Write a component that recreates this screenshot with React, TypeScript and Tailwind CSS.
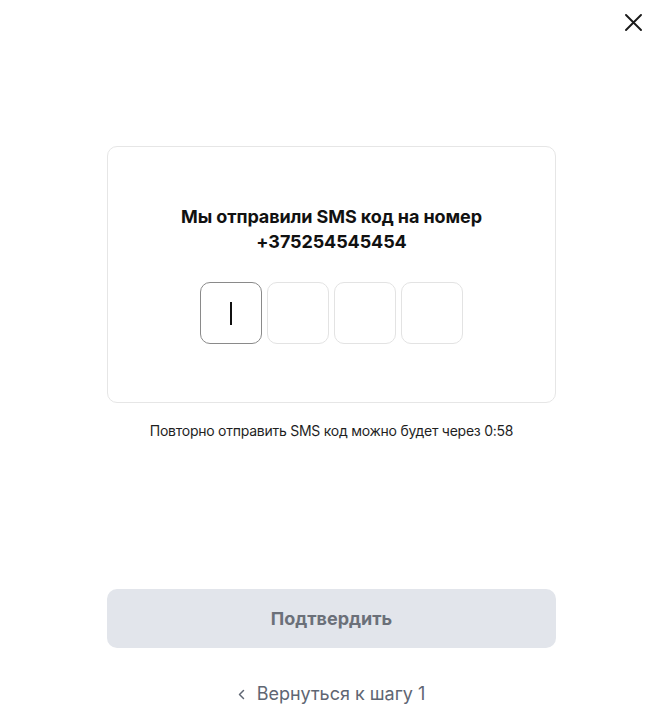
import { useState } from 'react';

const CODE_LENGTH = 4;

export default function App() {
  const [code] = useState<string[]>(Array(CODE_LENGTH).fill(''));
  const phone = '+375254545454';
  const seconds = 58;

  return (
    <div className="relative min-h-[709px] bg-white font-['Inter',sans-serif] text-[#111111]">
      {/* Close */}
      <button
        type="button"
        aria-label="Закрыть"
        className="absolute right-[18px] top-[10px] flex h-[24px] w-[24px] items-center justify-center"
      >
        <svg width="17" height="17" viewBox="0 0 17 17" fill="none">
          <path d="M1 1L16 16M16 1L1 16" stroke="#1a1a1a" strokeWidth="1.9" strokeLinecap="round" />
        </svg>
      </button>

      <div className="flex flex-col items-center pt-[146px]">
        {/* Card */}
        <div className="flex w-[449px] flex-col items-center rounded-[10px] border border-[#e6e6e6] pb-[58px] pt-[57px]">
          <h2 className="text-center text-[18px] font-bold leading-[25px] tracking-[-0.1px]">
            Мы отправили SMS код на номер
            <br />
            {phone}
          </h2>

          <div className="mt-[28px] flex gap-[5px]">
            {code.map((digit, i) => (
              <div
                key={i}
                className={
                  i === 0
                    ? 'flex h-[62px] w-[62px] items-center justify-center rounded-[10px] border border-[#8a8a8a]'
                    : 'flex h-[62px] w-[62px] items-center justify-center rounded-[10px] border border-[#e3e3e3]'
                }
              >
                {i === 0 && !digit ? <span className="h-[23px] w-[1.5px] bg-[#111111]" /> : digit}
              </div>
            ))}
          </div>
        </div>

        <p className="mt-[18px] text-[14px] leading-[20px] tracking-[-0.25px] text-[#1f1f1f]">
          Повторно отправить SMS код можно будет через 0:{seconds}
        </p>

        {/* Actions */}
        <button
          type="button"
          disabled
          className="mt-[148px] h-[59px] w-[449px] rounded-[10px] bg-[#e2e5eb] text-[18px] font-bold text-[#6b7079]"
        >
          Подтвердить
        </button>

        <button type="button" className="mt-[34px] flex items-center gap-[12px] text-[18px] leading-[24px] text-[#5f6673]">
          <svg width="7" height="11" viewBox="0 0 7 11" fill="none">
            <path d="M5.5 1.5L1.5 5.5L5.5 9.5" stroke="#5f6673" strokeWidth="1.5" strokeLinecap="round" strokeLinejoin="round" />
          </svg>
          Вернуться к шагу 1
        </button>
      </div>
    </div>
  );
}
